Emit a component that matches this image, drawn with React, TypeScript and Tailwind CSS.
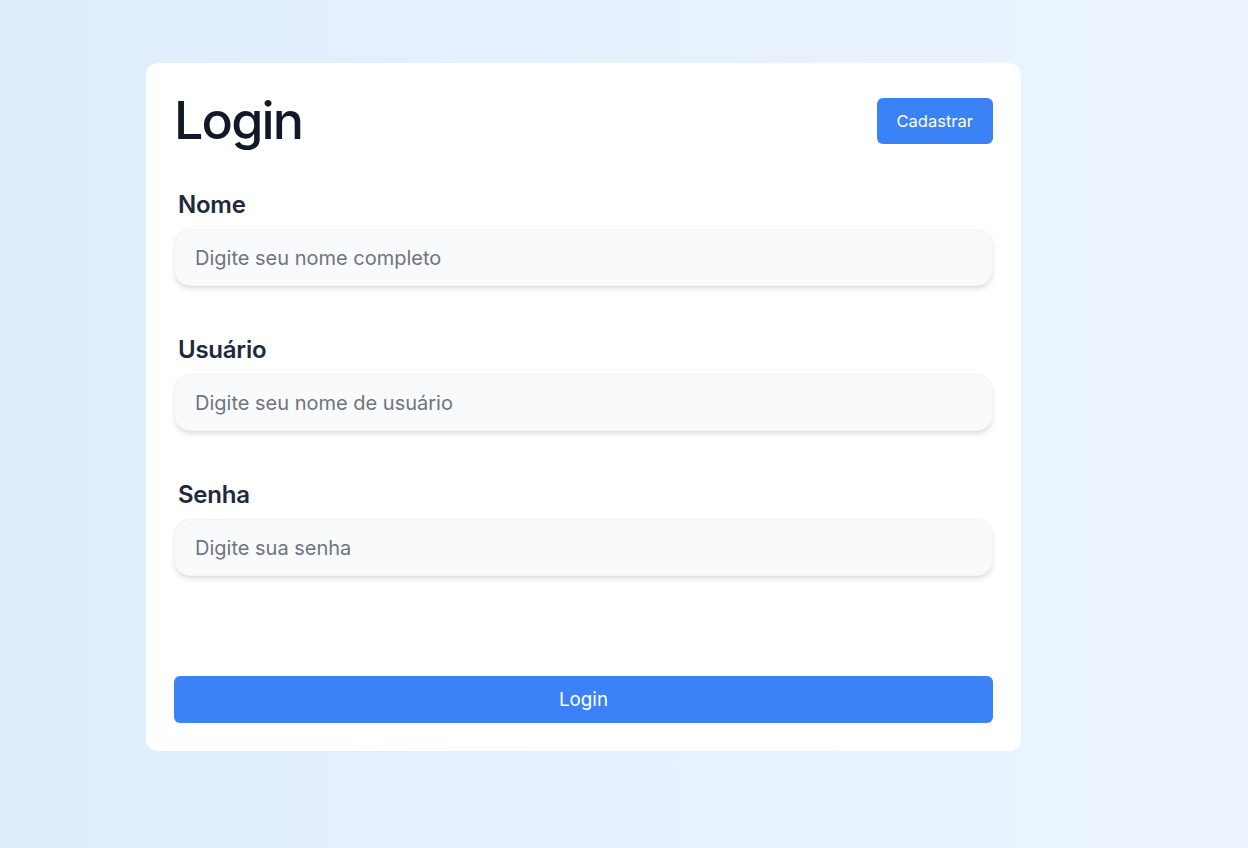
export default function App() {
  const fields = [
    { label: 'Nome', placeholder: 'Digite seu nome completo', type: 'text' },
    { label: 'Usuário', placeholder: 'Digite seu nome de usuário', type: 'text' },
    { label: 'Senha', placeholder: 'Digite sua senha', type: 'password' },
  ]

  return (
    <div
      className="min-h-[848px] w-full bg-gradient-to-r from-[#dfedfd] to-[#ecf5ff] pt-[63px] pl-[146px]"
      style={{ fontFamily: 'Inter, "Noto Sans", sans-serif' }}
    >
      <div className="w-[875px] rounded-xl bg-white px-7 pt-7 pb-7">
        {/* Header */}
        <div className="flex items-center justify-between">
          <h1 className="text-[52px] font-medium leading-[60px] tracking-[-0.035em] text-[#111827]">
            Login
          </h1>
          <button className="h-[46px] rounded-md bg-[#3b82f6] px-5 text-[16.5px] text-white">
            Cadastrar
          </button>
        </div>

        {/* Fields */}
        <div className="mt-[38px] flex flex-col gap-12">
          {fields.map((f) => (
            <div key={f.label} className="flex flex-col">
              <label className="mb-2 ml-1 text-2xl font-semibold leading-8 tracking-[-0.01em] text-[#1e293b]">
                {f.label}
              </label>
              <input
                type={f.type}
                placeholder={f.placeholder}
                className="h-[57px] w-full rounded-2xl border border-gray-100 bg-gray-50 px-5 text-xl text-gray-700 shadow-md outline-none placeholder:text-[#6f7480]"
              />
            </div>
          ))}
        </div>

        <button className="mt-[100px] h-[47px] w-full rounded-md bg-[#3b82f6] pt-0.5 text-[18.75px] text-white">
          Login
        </button>
      </div>
    </div>
  )
}
